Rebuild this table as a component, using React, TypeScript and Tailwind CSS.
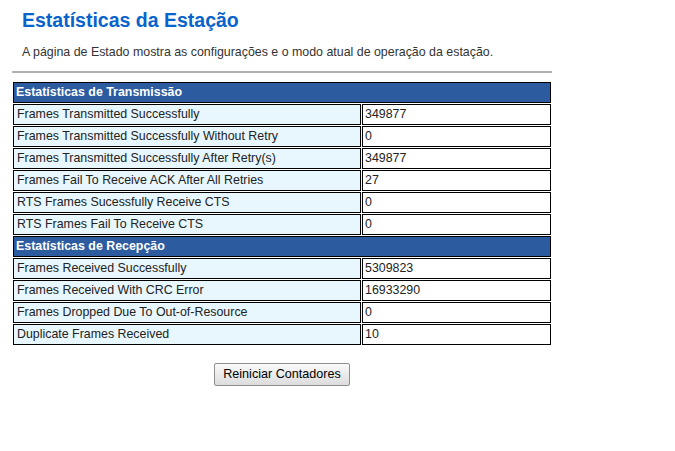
const transmissao = [
  ['Frames Transmitted Successfully', '349877'],
  ['Frames Transmitted Successfully Without Retry', '0'],
  ['Frames Transmitted Successfully After Retry(s)', '349877'],
  ['Frames Fail To Receive ACK After All Retries', '27'],
  ['RTS Frames Sucessfully Receive CTS', '0'],
  ['RTS Frames Fail To Receive CTS', '0'],
]

const recepcao = [
  ['Frames Received Successfully', '5309823'],
  ['Frames Received With CRC Error', '16933290'],
  ['Frames Dropped Due To Out-of-Resource', '0'],
  ['Duplicate Frames Received', '10'],
]

function Header({ title }: { title: string }) {
  return (
    <tr>
      <td colSpan={2} className="h-[21px] border border-black bg-[#2c5c9f] px-[2px] text-[12.4px] font-bold leading-none text-white">
        {title}
      </td>
    </tr>
  )
}

function Row({ label, value }: { label: string; value: string }) {
  return (
    <tr>
      <td className="h-[21px] w-[348px] border border-black bg-[#e8f6fe] px-[3px] text-[12.4px] leading-none text-[#222]">
        {label}
      </td>
      <td className="h-[21px] border border-black bg-white px-[2px] text-[12.4px] leading-none text-[#222]">
        {value}
      </td>
    </tr>
  )
}

export default function App() {
  return (
    <div className="min-h-screen bg-white font-['Liberation_Sans',Arial,sans-serif]">
      <div className="w-[552px] pl-[12px] pt-[8px]">
        <h1 className="pl-[10px] text-[19.5px] font-bold leading-[25px] text-[#0863cc]">Estatísticas da Estação</h1>
        <p className="mt-[12px] pl-[10px] text-[12.4px] leading-[14px] text-[#333]">
          A página de Estado mostra as configurações e o modo atual de operação da estação.
        </p>
        <div className="mt-[12px] h-[2px] bg-[#b0b0b0]" />
        <table className="mt-[8px] w-[540px] border-separate border-spacing-[1px]">
          <tbody>
            <Header title="Estatísticas de Transmissão" />
            {transmissao.map(([l, v]) => <Row key={l} label={l} value={v} />)}
            <Header title="Estatísticas de Recepção" />
            {recepcao.map(([l, v]) => <Row key={l} label={l} value={v} />)}
          </tbody>
        </table>
        <div className="mt-[17px] flex justify-center">
          <button className="h-[23px] rounded-[2px] border border-[#8e8e8e] bg-gradient-to-b from-[#fafafa] to-[#dcdcdc] px-[8px] text-[12.6px] text-black">
            Reiniciar Contadores
          </button>
        </div>
      </div>
    </div>
  )
}
